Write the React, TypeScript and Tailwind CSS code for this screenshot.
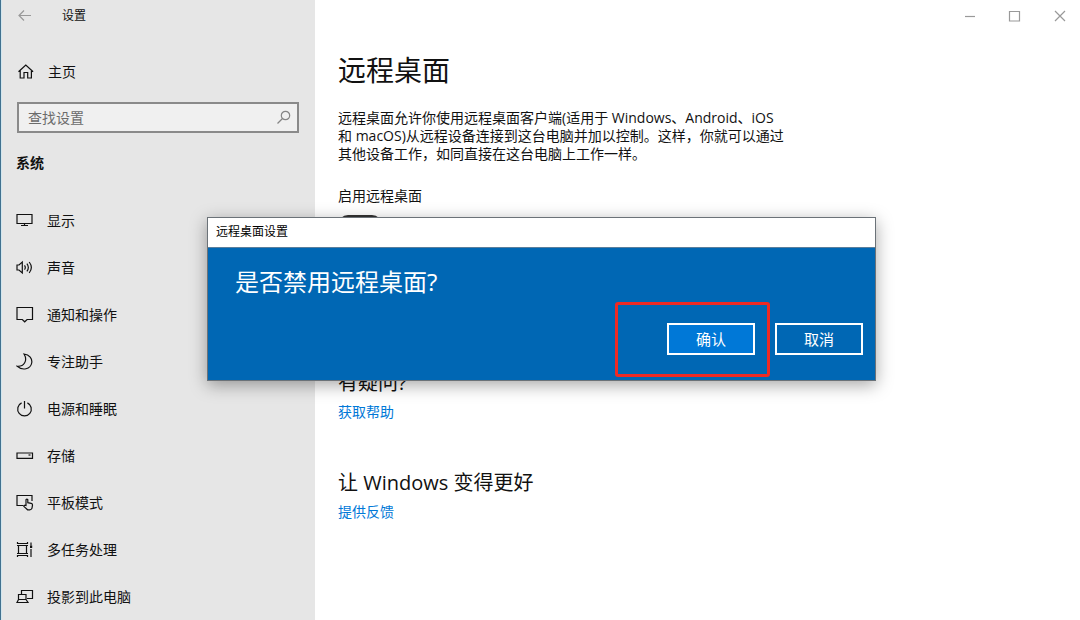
import type { ReactNode } from 'react';

interface NavItem {
  label: string;
  icon: ReactNode;
}

function Icon({ children }: { children: ReactNode }) {
  return (
    <svg
      width={18}
      height={18}
      viewBox="0 0 18 18"
      fill="none"
      stroke="currentColor"
      strokeWidth="1.2"
      className="shrink-0"
      aria-hidden="true"
    >
      {children}
    </svg>
  );
}

const NAV_ITEMS: NavItem[] = [
  {
    label: '显示',
    icon: (
      <>
        <path d="M1 2.5h15v9H1z" />
        <path d="M8.5 11.500v2M5 13.5h7" />
      </>
    ),
  },
  {
    label: '声音',
    icon: (
      <>
        <path d="M1 6h2l3.300-3v11L3 11H1z" />
        <path d="M8.500 6.300q1.600 2.200 0 4.400M10.900 4.700q2.900 3.800 0 7.600M13.200 3q4.300 5.500 0 11" />
      </>
    ),
  },
  {
    label: '通知和操作',
    icon: <path d="M1 1.500h15.500v12h-5.400l-2.400 2.300-2.400-2.300H1z" />,
  },
  {
    label: '专注助手',
    icon: (
      <path d="M8 1c5.500.6 8.500 4.700 7.700 9C14.500 16.300 6.500 18 1.300 13.300 8 13.800 12 7.500 8 1z" />
    ),
  },
  {
    label: '电源和睡眠',
    icon: (
      <>
        <path d="M5.600 2.900a6.800 6.800 0 1 0 5.800 0" />
        <path d="M8.500 1v7.500" />
      </>
    ),
  },
  {
    label: '存储',
    icon: (
      <>
        <path d="M1 6h15.500v5.300H1z" />
        <path d="M12.500 8h2" />
      </>
    ),
  },
  {
    label: '平板模式',
    icon: (
      <>
        <path d="M7.500 11.500H1V1.500h15v5.500" />
        <path d="M10 11.500V5.700q.9-1.200 1.800 0v3l3.400.7q1.400.4 1.300 1.700l-.5 3q-.6 1.700-2.200 1.700h-2.200L7.800 12.400q.3-1.500 2.200-.9z" />
      </>
    ),
  },
  {
    label: '多任务处理',
    icon: (
      <>
        <path d="M2.500 4.500h8v8h-8z" />
        <path d="M1.500 1v1.500h10V1M1.500 16v-1.500h10V16M1 4.500h11M1 12.500h11M15 1.500v3M15 8v8" />
        <path d="M14 4.500h2.200v2.500H14z" fill="currentColor" stroke="none" />
      </>
    ),
  },
  {
    label: '投影到此电脑',
    icon: (
      <>
        <path d="M5.500 6.500v-4h11v8H11" />
        <path d="M2.500 6.500h7.500v5H2.500zM2.500 11.500L1 14.500h11l-2-3" />
      </>
    ),
  },
];

function Sidebar() {
  return (
    <aside className="w-[315px] shrink-0 border-l border-[#41718f] bg-[#e6e6e6] shadow-[inset_1px_0_0_#d2e6ee]">
      <header className="flex h-8 items-center gap-7 pl-[15px]">
        <button type="button" aria-label="返回" className="text-[#999]">
          <Icon>
            <path d="M15 8.500H3M8 3.500L3 8.500l5 5" />
          </Icon>
        </button>
        <span className="text-xs">设置</span>
      </header>

      <a href="#home" className="mt-4 flex h-12 items-center gap-[13px] pl-4 text-sm">
        <Icon>
          <path d="M1.500 8.800L8.800 2l7.300 6.800M3.200 7.300V15H7V9.500h3.700V15h3.700V7.300" />
        </Icon>
        主页
      </a>

      <div className="mt-[6px] mr-4 ml-4 flex h-[31px] items-center border-2 border-[#8a8a8a] bg-[#f0f0f0] pr-1 pl-[9px]">
        <input
          type="text"
          aria-label="查找设置"
          placeholder="查找设置"
          className="min-w-0 flex-1 bg-transparent text-sm leading-5 outline-none placeholder:text-[#6b6b6b]"
        />
        <button type="button" aria-label="搜索" className="text-[#858585]">
          <Icon>
            <circle cx="10.500" cy="6.500" r="4.200" />
            <path d="M7.500 9.500L2.500 14.500" />
          </Icon>
        </button>
      </div>

      <h2 className="mt-3 h-9 pl-[15px] text-sm leading-9 font-bold">系统</h2>

      <nav className="mt-4">
        {NAV_ITEMS.map((item) => (
          <a
            key={item.label}
            href="#settings"
            className="flex h-[47px] items-center gap-[13px] pl-[15px] text-sm"
          >
            <Icon>{item.icon}</Icon>
            {item.label}
          </a>
        ))}
      </nav>
    </aside>
  );
}

function WindowControls() {
  return (
    <div className="flex h-8 justify-end gap-[5px] text-[#999]">
      <button type="button" aria-label="最小化" className="flex w-10 items-center justify-center">
        <Icon>
          <path d="M4 9.500h10" />
        </Icon>
      </button>
      <button type="button" aria-label="最大化" className="flex w-10 items-center justify-center">
        <Icon>
          <path d="M3.500 4.500h10v9.500h-10z" />
        </Icon>
      </button>
      <button type="button" aria-label="关闭" className="flex w-10 items-center justify-center">
        <Icon>
          <path d="M4 4l10 10M14 4L4 14" />
        </Icon>
      </button>
    </div>
  );
}

function Content() {
  return (
    <main className="min-w-0 flex-1">
      <WindowControls />
      <div className="pl-[23px]">
        <h1 className="mt-5 text-[28px] leading-9">远程桌面</h1>
        <p className="mt-[21px] max-w-[448px] text-sm leading-[18px]">
          远程桌面允许你使用远程桌面客户端(适用于 Windows、Android、iOS 和
          macOS)从远程设备连接到这台电脑并加以控制。这样，你就可以通过其他设备工作，如同直接在这台电脑上工作一样。
        </p>
        <label htmlFor="enable-remote" className="mt-6 block text-sm leading-[18px]">
          启用远程桌面
        </label>
        <input
          id="enable-remote"
          type="checkbox"
          defaultChecked
          className="mt-[10px] block h-5 w-11 appearance-none rounded-full bg-[#333]"
        />

        <h2 className="mt-[134px] text-xl leading-7">有疑问?</h2>
        <a href="#help" className="mt-[5px] block text-sm leading-5 text-[#0078d7]">
          获取帮助
        </a>

        <h2 className="mt-[47px] text-xl leading-7">让 Windows 变得更好</h2>
        <a href="#feedback" className="mt-[5px] block text-sm leading-5 text-[#0078d7]">
          提供反馈
        </a>
      </div>
    </main>
  );
}

function ConfirmDialog() {
  return (
    <div
      role="dialog"
      aria-labelledby="dialog-title"
      className="absolute top-[217px] left-[207px] w-[669px] border border-[#6b7278] bg-[#0067b4] text-white shadow-[0_4px_16px_rgba(0,0,0,0.35)]"
    >
      <div
        id="dialog-title"
        className="h-[30px] border-b border-[#5b7f9c] bg-white pl-2 text-xs leading-7 text-black"
      >
        远程桌面设置
      </div>
      <div className="pt-[18px] pr-3 pb-[25px] pl-[27px]">
        <p className="text-2xl leading-8">是否禁用远程桌面?</p>
        <div className="mt-[25px] flex justify-end gap-5">
          <div className="relative">
            <button
              type="button"
              className="h-8 w-[88px] border-2 border-white bg-[#0078d7] text-[15px] leading-5"
            >
              确认
            </button>
            <div className="pointer-events-none absolute -top-[21px] -right-[15px] -bottom-[22px] -left-[52px] rounded-[3px] border-3 border-[#ee2a24]" />
          </div>
          <button type="button" className="h-8 w-[88px] border-2 border-white text-[15px] leading-5">
            取消
          </button>
        </div>
      </div>
    </div>
  );
}

export default function App() {
  return (
    <div
      lang="zh-CN"
      className="relative flex min-h-screen bg-white font-['Open_Sans','Noto_Sans_CJK_SC',sans-serif] text-[#111]"
    >
      <Sidebar />
      <Content />
      <ConfirmDialog />
    </div>
  );
}
